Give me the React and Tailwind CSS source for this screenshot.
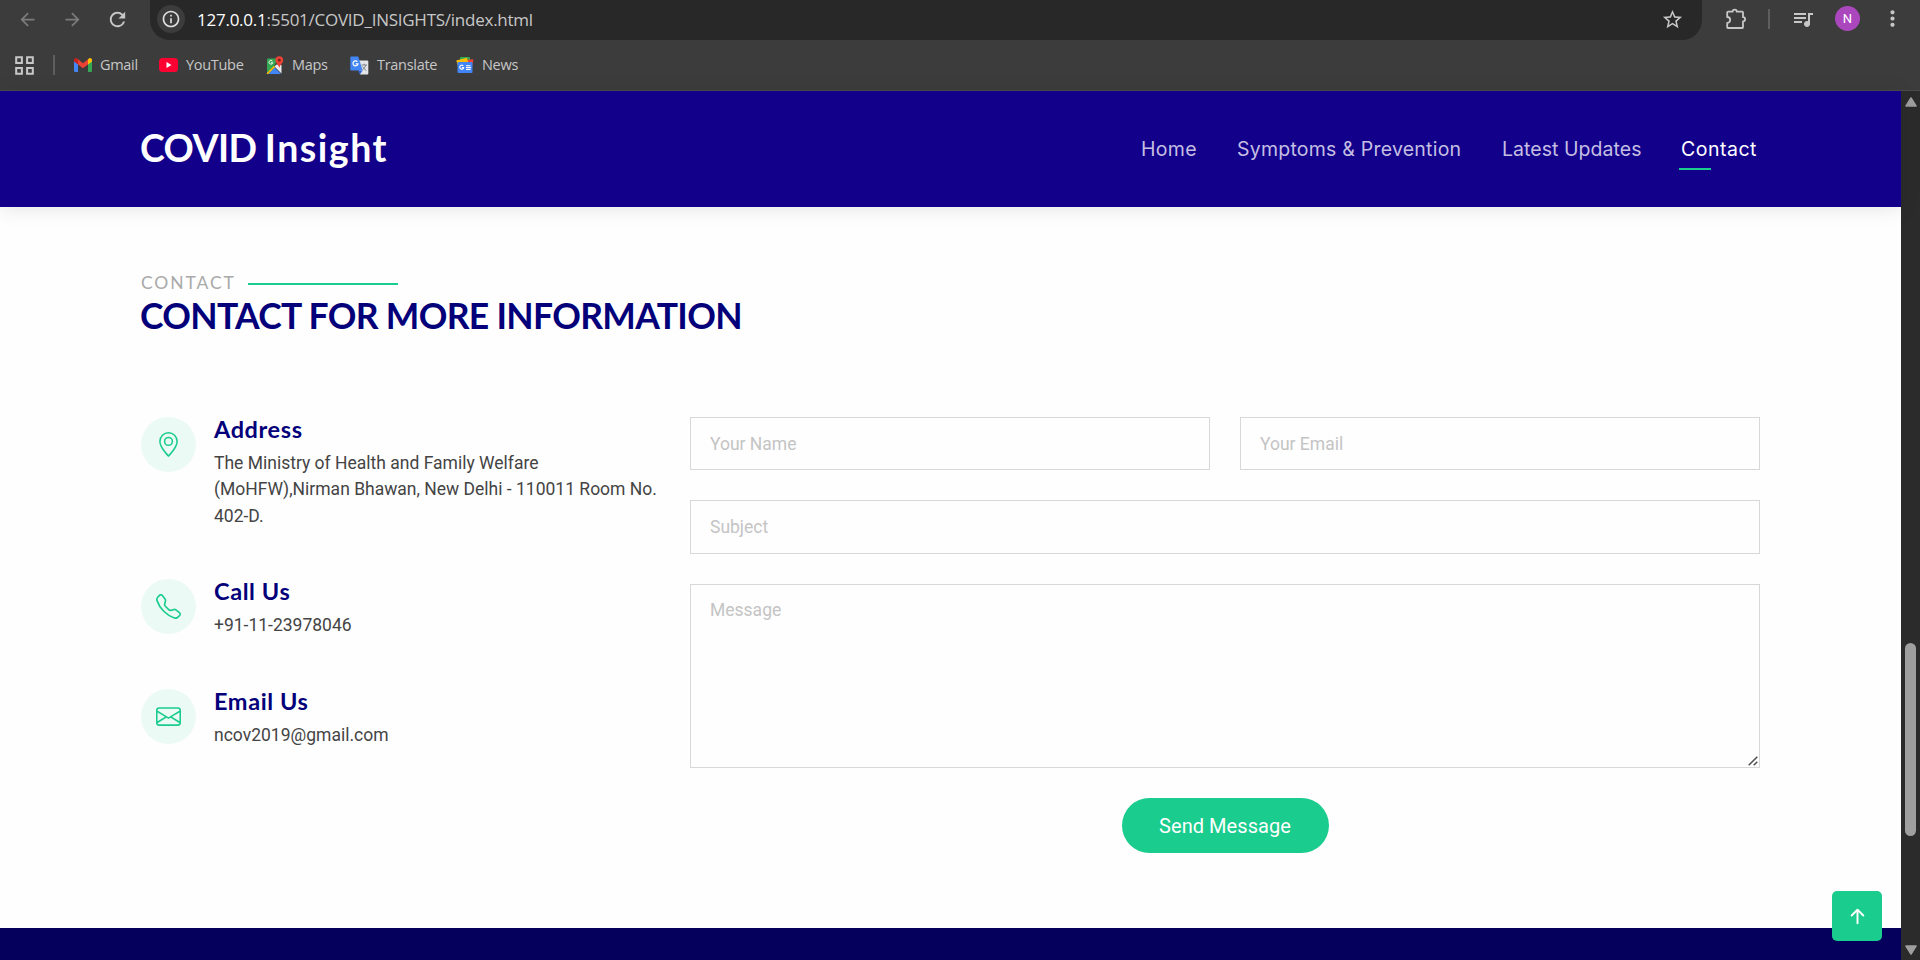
import React from "react";
import { BsGeoAlt, BsTelephone, BsEnvelope, BsArrowUpShort } from "react-icons/bs";
import { MdArrowBack, MdArrowForward, MdRefresh, MdOutlineInfo, MdStarBorder, MdQueueMusic, MdMoreVert } from "react-icons/md";

function Puzzle() {
  return (
    <svg className="size-[24px]" viewBox="0 0 24 24" fill="none" stroke="#c7c7c7" strokeWidth="1.8" strokeLinejoin="round">
      <path d="M4.2 4.7H8.6A2.1 2.1 0 0 1 12.8 4.7H18.3Q19 4.7 19 5.4V10.2A2.1 2.1 0 0 1 19 14.4V20.3Q19 21 18.3 21H3.9Q3.2 21 3.2 20.3V16A3 3 0 0 0 3.2 10V5.4Q3.2 4.7 4.2 4.7Z" />
    </svg>
  );
}

function AppsGrid() {
  return (
    <svg className="size-[19px]" viewBox="1 1 16 16" fill="none" stroke="#c7c7c7" strokeWidth="1.7">
      <path d="M2 2h4.800v4.800H2zM11.200 2H16v4.800h-4.800zM2 11.200h4.800V16H2zM11.200 11.200H16V16h-4.800z" />
    </svg>
  );
}

function GmailLogo() {
  return (
    <svg className="h-[14px] w-[18px]" viewBox="0 0 18 14">
      <path fill="#4285f4" d="M0 2.5V12.8Q0 14 1.2 14H4V5.5z" />
      <path fill="#34a853" d="M18 2.5V12.8Q18 14 16.800 14H14V5.500z" />
      <path fill="#ea4335" d="M4 1.300L9 5.200L14 1.300V6.500L9 10.300L4 6.500z" />
      <path fill="#c5221f" d="M0 2Q0 0 1.900 0Q2.600 0 4 1.300V6.500L0 3.500z" />
      <path fill="#fbbc04" d="M18 2Q18 0 16.100 0Q15.400 0 14 1.300V6.500L18 3.500z" />
    </svg>
  );
}

function YouTubeLogo() {
  return (
    <svg className="h-[14px] w-[19px]" viewBox="0 0 19 14">
      <rect width="19" height="14" rx="3.500" fill="#ff0033" />
      <path d="M7.500 4L12.500 7L7.500 10z" fill="#fff" />
    </svg>
  );
}

function MapsLogo() {
  return (
    <svg className="h-[19px] w-[18px]" viewBox="0 0 18 19">
      <path fill="#34a853" d="M1.500 2.500H12L8 10.500L1 17V3.500z" />
      <path fill="#e8eaed" d="M15.500 9V17.500L8.500 10.500L10.500 8.500z" />
      <path fill="#fbbc04" d="M.8 17L8 9.800L9.300 11.200L2.500 18H.8z" />
      <path fill="#4285f4" d="M2.500 18L8.700 11.500L15 18z" />
      <path fill="#ea4335" d="M13.300.3A3.900 3.900 0 0 1 17.200 4.200C17.200 7 14 8.500 13.300 12C12.600 8.500 9.400 7 9.400 4.200A3.900 3.900 0 0 1 13.300.3z" />
      <circle cx="13.300" cy="4.200" r="1.400" fill="#7b1f1a" />
      <path d="M6.400 5A1.900 1.900 0 1 0 6.800 6.700H5" fill="none" stroke="#fff" strokeWidth=".9" />
    </svg>
  );
}

function TranslateLogo() {
  return (
    <svg className="size-[19px]" viewBox="0 0 19 19">
      <path fill="#e3e5e8" d="M8 4.500H17.200Q18.300 4.500 18.300 5.600V17.400Q18.300 18.500 17.200 18.500H10z" />
      <path fill="#3367d6" d="M8 14.500H12.500L10 18.500z" />
      <path fill="#4285f4" d="M1.400.5H8.200L12.700 14.500H1.400Q.3 14.500.3 13.400V1.600Q.3.5 1.400.5z" />
      <path d="M7.400 5.700A2.500 2.500 0 1 0 8 7.800H5.700" fill="none" stroke="#fff" strokeWidth="1.200" />
      <path d="M11.500 9H17M14.200 7.800V9M16 9Q15 12 12.500 13.800M12.500 10.500Q14 13 16.300 14.500" fill="none" stroke="#747b84" strokeWidth=".9" />
    </svg>
  );
}

function NewsLogo() {
  return (
    <svg className="h-[16px] w-[18px]" viewBox="0 0 18 16">
      <path fill="#34a853" d="M4 .6Q4 0 4.600 0H13.400Q14 0 14 .6V6H4z" />
      <path fill="#ea4335" d="M9 3L16.600 2.300Q17.400 2.300 17.300 3.200L15.500 12z" />
      <path fill="#fbbc04" d="M.4 4Q.2 3.400.9 3.200L11 .8L13 9L3 12z" />
      <rect x="1.500" y="5" width="15" height="11" rx="1" fill="#4285f4" />
      <path d="M7.200 8.800A2 2 0 1 0 7.700 10.600H5.800M10 8.700H14.500M10 10.600H15M10 12.500H14.500" fill="none" stroke="#fff" strokeWidth="1.100" />
    </svg>
  );
}

const bookmarks = [
  { name: "Gmail", logo: <GmailLogo />, box: "w-[64px]", slot: "w-[26px]", gap: "mr-[21px]" },
  { name: "YouTube", logo: <YouTubeLogo />, box: "w-[85px]", slot: "w-[27px]", gap: "mr-[22px]" },
  { name: "Maps", logo: <MapsLogo />, box: "w-[63px]", slot: "w-[26px]", gap: "mr-[21px]" },
  { name: "Translate", logo: <TranslateLogo />, box: "w-[85px]", slot: "w-[27px]", gap: "mr-[21px]" },
  { name: "News", logo: <NewsLogo />, box: "w-[63px]", slot: "w-[26px]", gap: "" },
];

function BrowserBar() {
  return (
    <div className="h-[91px] shrink-0 border-b border-[#4a4a4a] bg-[#3c3c3c] font-['Open_Sans',sans-serif]">
      <div className="flex h-[40px] items-start">
        <div className="flex w-[150px] items-center pt-[8px] pl-[17px]">
          <MdArrowBack className="size-[21px] text-[#7b7b7b]" />
          <MdArrowForward className="ml-[24px] size-[21px] text-[#7b7b7b]" />
          <MdRefresh className="ml-[23px] size-[23px] text-[#c7c7c7]" />
        </div>
        <div className="flex h-[40px] w-[1552px] items-start rounded-b-[20px] bg-[#282828] pr-[18px] pl-[7px]">
          <div className="mt-[5px] flex size-[28px] items-center justify-center rounded-full bg-[#3c3c3c]">
            <MdOutlineInfo className="size-[20px] text-[#e0e0e0]" />
          </div>
          <div className="mt-[8px] ml-[12px] grow text-[17px] leading-[24px] tracking-[-0.25px] text-[#c7c7c7]">
            <span className="text-white">127.0.0.1</span>:5501/COVID_INSIGHTS/index.html
          </div>
          <MdStarBorder className="mt-[8px] size-[23px] text-[#c7c7c7]" />
        </div>
        <div className="flex grow items-center pt-[6px] pl-[22px]">
          <Puzzle />
          <div className="ml-[20px] h-[20px] w-[2px] bg-[#5e5e5e]" />
          <MdQueueMusic className="ml-[21px] size-[24px] text-[#c7c7c7]" />
          <div className="ml-[20px] flex size-[25px] items-center justify-center rounded-full bg-[#ab47bc] font-['Roboto',sans-serif] text-[13px] text-white">N</div>
          <MdMoreVert className="ml-[20px] size-[25px] text-[#c7c7c7]" />
        </div>
      </div>
      <div className="flex h-[50px] items-center pl-[15px]">
        <AppsGrid />
        <div className="mr-[19px] ml-[19px] h-[20px] w-[2px] bg-[#5e5e5e]" />
        {bookmarks.map((b) => (
          <div key={b.name} className={`flex shrink-0 items-center ${b.box} ${b.gap}`}>
            <div className={`flex shrink-0 items-center ${b.slot}`}>{b.logo}</div>
            <span className="text-[14.500px] leading-[20px] tracking-[-0.3px] whitespace-nowrap text-[#c7c7c7]">{b.name}</span>
          </div>
        ))}
      </div>
    </div>
  );
}

function SiteHeader() {
  return (
    <header className="relative flex h-[116px] shrink-0 items-center justify-between bg-[#12008b] pr-[143px] pl-[140px] shadow-[0_2px_19px_rgba(0,0,0,0.1)]">
      <h1 className="pb-[4px] font-['Lato',sans-serif] text-[37.500px] leading-[45px] font-bold text-white">
        <span className="tracking-[-0.6px]">COVID </span>
        <span className="tracking-[1.500px]">Insight</span>
      </h1>
      <nav className="flex gap-[40px] font-['Inter',sans-serif] text-[19.500px] leading-[28px] whitespace-nowrap text-[#c4bfe2]">
        <a className="w-[56px] tracking-[0.300px]">Home</a>
        <a className="w-[225px] tracking-[0.230px]">Symptoms &amp; Prevention</a>
        <a className="w-[139px] tracking-[0.050px]">Latest Updates</a>
        <a className="relative w-[77px] tracking-[0.500px] text-white">
          Contact
          <span className="absolute -bottom-[7px] -left-[2px] h-[2px] w-[32px] bg-[#1acc8d]" />
        </a>
      </nav>
    </header>
  );
}

function InfoItem({ icon, title, children }) {
  return (
    <div className="flex gap-[18px]">
      <div className="flex size-[55px] shrink-0 items-center justify-center rounded-full bg-[#ecfaf5] text-[25px] text-[#1acc8d]">{icon}</div>
      <div>
        <h4 className="-mt-[1px] font-['Lato',sans-serif] text-[23.500px] leading-[27px] font-bold tracking-[0.600px] text-[#03007a]">{title}</h4>
        <p className="mt-[7px] font-['Roboto',sans-serif] text-[17.500px] leading-[26.250px] whitespace-nowrap text-[#444444]">{children}</p>
      </div>
    </div>
  );
}

const field = "block w-full rounded-none border border-[#d8d8d8] bg-transparent px-[19px] text-[17.500px] outline-none placeholder:text-[#c4c4c4]";

function ContactForm() {
  return (
    <form className="flex w-[1070px] flex-col font-['Roboto',sans-serif]">
      <div className="grid grid-cols-2 gap-[30px]">
        <input className={`${field} h-[53px]`} placeholder="Your Name" />
        <input className={`${field} h-[53px]`} placeholder="Your Email" />
      </div>
      <input className={`${field} mt-[30px] h-[54px]`} placeholder="Subject" />
      <div className="relative mt-[30px]">
        <textarea className={`${field} h-[184px] resize-none py-[12px] leading-[26.250px]`} placeholder="Message" />
        <svg className="absolute right-[2px] bottom-[2px] size-[10px]" viewBox="0 0 10 10" stroke="#4f4f4f" strokeWidth="1.500">
          <path d="M.7 9.300L9.300.7M5.700 9.300L9.300 5.700" />
        </svg>
      </div>
      <button type="button" className="mt-[30px] h-[55px] w-[207px] self-center rounded-full bg-[#1acc8d] text-[20px] tracking-[0.050px] text-white">Send Message</button>
    </form>
  );
}

function Scrollbar() {
  return (
    <div className="flex w-[19px] shrink-0 flex-col items-center bg-[#2b2b2b]">
      <svg className="mt-[6px] h-[10px] w-[12px]" viewBox="0 0 12 10"><path d="M6 1L11 9H1z" fill="#9f9f9f" stroke="#9f9f9f" strokeWidth="1.500" strokeLinejoin="round" /></svg>
      <div className="mt-[536px] h-[193px] w-[11px] rounded-full bg-[#9f9f9f]" />
      <svg className="mt-[109px] h-[10px] w-[12px]" viewBox="0 0 12 10"><path d="M6 9L11 1H1z" fill="#9f9f9f" stroke="#9f9f9f" strokeWidth="1.500" strokeLinejoin="round" /></svg>
    </div>
  );
}

export default function App() {
  return (
    <div className="flex h-[960px] w-[1920px] flex-col overflow-hidden">
      <BrowserBar />
      <div className="flex min-h-0 grow">
        <div className="relative flex w-[1901px] flex-col bg-[#fefefe]">
          <SiteHeader />
          <main className="h-[721px] px-[141px] pt-[62px]">
            <div className="flex h-[28px] items-center font-['Lato',sans-serif] text-[17.500px] leading-[28px] tracking-[1.900px] text-[#aaaaaa]">
              <span className="w-[107px]">CONTACT</span>
              <span className="mt-[2px] h-[2px] w-[150px] bg-[#1acc8d]" />
            </div>
            <h2 className="-ml-[1px] font-['Lato',sans-serif] text-[35.500px] leading-[38px] font-bold tracking-[-0.680px] whitespace-nowrap text-[#03007a]">CONTACT FOR MORE INFORMATION</h2>
            <div className="mt-[82px] flex justify-between">
              <div className="flex flex-col">
                <InfoItem icon={<BsGeoAlt />} title="Address">
                  The Ministry of Health and Family Welfare<br />(MoHFW),Nirman Bhawan, New Delhi - 110011 Room No.<br />402-D.
                </InfoItem>
                <div className="mt-[50px]"><InfoItem icon={<BsTelephone />} title="Call Us">+91-11-23978046</InfoItem></div>
                <div className="mt-[51px]"><InfoItem icon={<BsEnvelope />} title="Email Us">ncov2019@gmail.com</InfoItem></div>
              </div>
              <ContactForm />
            </div>
          </main>
          <footer className="grow bg-[#06005d]" />
          <button type="button" className="absolute right-[19px] bottom-[19px] flex size-[50px] items-center justify-center rounded-[5px] bg-[#1acc8d] pl-[1px] text-white">
            <BsArrowUpShort className="size-[31px]" />
          </button>
        </div>
        <Scrollbar />
      </div>
    </div>
  );
}
